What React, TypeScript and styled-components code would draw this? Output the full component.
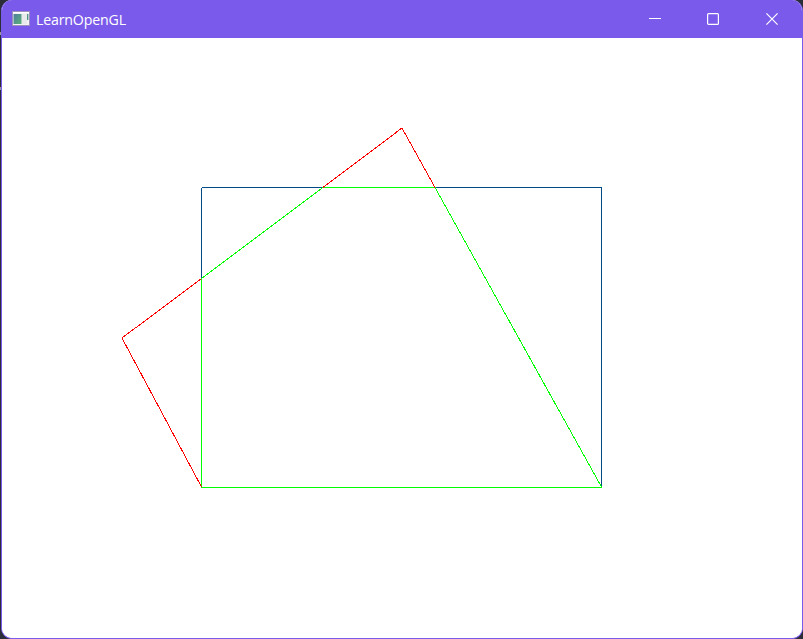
import React from "react";
import styled, { createGlobalStyle } from "styled-components";

const GlobalStyle = createGlobalStyle`
  html, body, #root { margin: 0; height: 100%; }
  body { background: #2b2d38; overflow: hidden; }
`;

const Desktop = styled.div`
  box-sizing: border-box;
  width: 803px;
  height: 639px;
  padding-left: 1px;
  background:
    linear-gradient(#b08c78, #7ea4c4) 0 32px / 1px 3px no-repeat,
    linear-gradient(#b08c78, #7ea4c4) 0 87px / 1px 3px no-repeat,
    #2b2d38;
`;

const Window = styled.main`
  box-sizing: border-box;
  display: flex;
  flex-direction: column;
  height: 100%;
  border: 1px solid #7a5aea;
  border-top: 0;
  border-radius: 11px;
  overflow: hidden;
  background: #fff;
`;

const TitleBar = styled.header`
  display: flex;
  align-items: center;
  flex: 0 0 38px;
  background: #7a5aea;
  color: #fff;
`;

const AppIcon = styled.svg`
  flex: none;
  margin: 0 6px 1px 10px;
`;

const Title = styled.h1`
  flex: 1;
  margin: 0;
  padding-top: 1px;
  font: 400 14.2px/20px "Open Sans", "Noto Sans", sans-serif;
  letter-spacing: -0.18px;
`;

const Controls = styled.div`
  display: flex;
  margin-right: 1px;
`;

const ControlButton = styled.button`
  display: flex;
  align-items: center;
  justify-content: center;
  width: 58.5px;
  height: 38px;
  padding: 0;
  border: 0;
  background: transparent;
  color: #fff;
`;

const Viewport = styled.svg`
  display: block;
  flex: none;
  background: #fff;
`;

type Segment = { from: [number, number]; to: [number, number]; color: string };

const BLUE = "#004b87";
const GREEN = "#00ff00";
const RED = "#ff0000";

const segments: Segment[] = [
  { from: [200, 149.5], to: [321, 149.5], color: BLUE },
  { from: [433, 149.5], to: [600, 149.5], color: BLUE },
  { from: [599.5, 149], to: [599.5, 449], color: BLUE },
  { from: [199.5, 150], to: [199.5, 240], color: BLUE },
  { from: [321, 149.5], to: [433, 149.5], color: GREEN },
  { from: [199.5, 240], to: [199.5, 450], color: GREEN },
  { from: [199, 449.5], to: [600, 449.5], color: GREEN },
  { from: [199.5, 240.5], to: [321, 149.5], color: GREEN },
  { from: [433, 149.5], to: [599.5, 449], color: GREEN },
  { from: [199.5, 240.5], to: [120, 300], color: RED },
  { from: [120, 300], to: [199.5, 449], color: RED },
  { from: [321, 149.5], to: [400, 90], color: RED },
  { from: [400, 90], to: [433, 149.5], color: RED },
];

export default function App() {
  return (
    <Desktop>
      <GlobalStyle />
      <Window>
        <TitleBar>
          <AppIcon width="18" height="15" viewBox="0 0 18 15" aria-hidden="true">
            <defs>
              <linearGradient id="pane" x1="0" y1="0" x2="1" y2="1">
                <stop offset="0" stopColor="#527da0" />
                <stop offset="1" stopColor="#58b277" />
              </linearGradient>
            </defs>
            <rect x="0.5" y="0.5" width="17" height="14" fill="#f3f3f5" stroke="#9b91bb" />
            <rect x="1" y="1" width="16" height="1" fill="#ffffff" />
            <rect x="1.5" y="3" width="8" height="10" fill="url(#pane)" />
            <rect x="10" y="3" width="5" height="10" fill="#e8eaec" />
            <rect x="15" y="3" width="1.4" height="6" fill="#539589" />
          </AppIcon>
          <Title>LearnOpenGL</Title>
          <Controls>
            <ControlButton aria-label="Minimize">
              <svg width="12" height="12" shapeRendering="crispEdges">
                <rect x="0" y="5" width="12" height="1" fill="currentColor" />
              </svg>
            </ControlButton>
            <ControlButton aria-label="Maximize">
              <svg width="12" height="12">
                <rect x="0.6" y="0.6" width="10.8" height="10.8" rx="1" fill="none" stroke="currentColor" strokeWidth="1.2" />
              </svg>
            </ControlButton>
            <ControlButton aria-label="Close">
              <svg width="12" height="12">
                <path d="M.4 .4 11.6 11.6M11.6 .4 .4 11.6" stroke="currentColor" strokeWidth="1.2" />
              </svg>
            </ControlButton>
          </Controls>
        </TitleBar>
        <Viewport width="800" height="600" viewBox="0 0 800 600" shapeRendering="crispEdges">
          {segments.map(({ from, to, color }, i) => (
            <line key={i} x1={from[0]} y1={from[1]} x2={to[0]} y2={to[1]} stroke={color} strokeWidth="1" />
          ))}
        </Viewport>
      </Window>
    </Desktop>
  );
}
